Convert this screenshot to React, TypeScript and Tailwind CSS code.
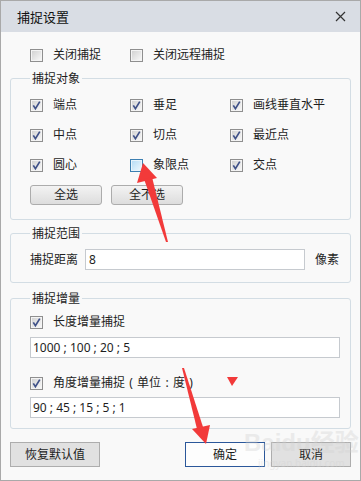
import React from "react";

function Box({ checked, hover }: { checked?: boolean; hover?: boolean }) {
  return (
    <span
      className={
        hover
          ? "relative flex h-[13px] w-[13px] shrink-0 items-center justify-center border border-[#3c7fb1] bg-[#e8f4fc]"
          : "relative flex h-[13px] w-[13px] shrink-0 items-center justify-center border border-[#8f8f8f] bg-[#f4f4f4]"
      }
    >
      <span
        className={
          hover
            ? "h-[9px] w-[9px] bg-gradient-to-br from-[#b7ddf6] to-[#eaf6fd]"
            : "h-[9px] w-[9px] bg-gradient-to-br from-[#d3d3d3] to-[#f7f7f7]"
        }
      />
      {checked && (
        <svg className="absolute left-0 top-0" width="11" height="11" viewBox="0 0 11 11">
          <path d="M2.3 5.4 L4.4 8.6 L8.8 1.6" fill="none" stroke="#3f5188" strokeWidth="1.7" strokeLinejoin="miter" />
        </svg>
      )}
    </span>
  );
}

function Check({ label, checked, hover }: { label: React.ReactNode; checked?: boolean; hover?: boolean }) {
  return (
    <div className="flex h-[20px] items-center gap-[10px]">
      <Box checked={checked} hover={hover} />
      <span className="whitespace-nowrap leading-[20px]">{label}</span>
    </div>
  );
}

function Field({ value, className }: { value: string; className: string }) {
  return (
    <div className={className}>
      <span className="leading-[19px]">{value}</span>
    </div>
  );
}

export default function App() {
  return (
    <div className="relative h-[481px] w-[361px] overflow-hidden border border-[#a9a9a9] bg-[#f9f9f9] font-['Noto_Sans','Noto_Sans_CJK_SC',sans-serif] text-[12px] text-[#1e1e1e]">
      {/* title bar */}
      <div className="flex h-[31px] items-center justify-between bg-[#d9dde4] pl-[16px] pr-[14px]">
        <span className="text-[13px] leading-[20px] text-[#111]">捕捉设置</span>
        <svg width="11" height="11" viewBox="0 0 11 11">
          <path d="M1 1 L10 10 M10 1 L1 10" stroke="#333" strokeWidth="1.2" />
        </svg>
      </div>

      <div className="flex flex-col px-[9px]">
        {/* top row */}
        <div className="mt-[13px] flex pl-[20px]">
          <div className="w-[100px]">
            <Check label="关闭捕捉" />
          </div>
          <Check label="关闭远程捕捉" />
        </div>

        {/* group 1 */}
        <fieldset className="mt-[5px] rounded-[3px] border border-[#d3dde4] pb-[14px] pl-[19px] pr-[10px] pt-[8px]">
          <legend className="px-[2px] text-[12px] leading-[17px]">捕捉对象</legend>
          <div className="grid grid-cols-[100px_100px_100px] gap-y-[10px]">
            <Check label="端点" checked />
            <Check label="垂足" checked />
            <Check label="画线垂直水平" checked />
            <Check label="中点" checked />
            <Check label="切点" checked />
            <Check label="最近点" checked />
            <Check label="圆心" checked />
            <Check label="象限点" hover />
            <Check label="交点" checked />
          </div>
          <div className="mt-[10px] flex gap-[9px]">
            <button className="flex h-[20px] w-[72px] items-center justify-center rounded-[3px] border border-[#acacac] bg-gradient-to-b from-[#f3f3f3] to-[#dddddd] leading-[18px]">
              全选
            </button>
            <button className="flex h-[20px] w-[72px] items-center justify-center rounded-[3px] border border-[#acacac] bg-gradient-to-b from-[#f3f3f3] to-[#dddddd] leading-[18px]">
              全不选
            </button>
          </div>
        </fieldset>

        {/* group 2 */}
        <fieldset className="mt-[5px] rounded-[3px] border border-[#d3dde4] pb-[12px] pl-[19px] pr-[10px] pt-[7px]">
          <legend className="px-[2px] text-[12px] leading-[17px]">捕捉范围</legend>
          <div className="flex h-[21px] items-center">
            <span className="w-[55px]">捕捉距离</span>
            <Field value="8" className="flex h-[21px] w-[220px] items-center border border-[#c6cacf] bg-white px-[3px]" />
            <span className="ml-[10px]">像素</span>
          </div>
        </fieldset>

        {/* group 3 */}
        <fieldset className="mt-[7px] rounded-[3px] border border-[#d3dde4] pb-[10px] pl-[19px] pr-[10px] pt-[5px]">
          <legend className="px-[2px] text-[12px] leading-[17px]">捕捉增量</legend>
          <Check label="长度增量捕捉" checked />
          <Field value="1000 ; 100 ; 20 ; 5" className="mt-[5px] flex h-[21px] w-[310px] items-center border border-[#c6cacf] bg-white px-[2px]" />
          <div className="mt-[15px]">
            <Check
              checked
              label={
                <span className="flex items-center">
                  <span>角度增量捕捉</span>
                  <span className="inline-block w-[12px] text-center">(</span>
                  <span>单位</span>
                  <span className="inline-block w-[12px] text-center">:</span>
                  <span>度</span>
                  <span className="inline-block w-[12px] text-center">)</span>
                </span>
              }
            />
          </div>
          <Field value="90 ; 45 ; 15 ; 5 ; 1" className="mt-[4px] flex h-[21px] w-[310px] items-center border border-[#c6cacf] bg-white px-[2px]" />
        </fieldset>

        {/* bottom buttons */}
        <div className="mt-[13px] flex">
          <button className="flex h-[25px] w-[90px] items-center justify-center border border-[#adadad] bg-[#e1e1e1]">
            恢复默认值
          </button>
          <div className="flex-1" />
          <button className="flex h-[25px] w-[80px] items-center justify-center border border-[#2b579a] bg-[#fdfdfd]">
            确定
          </button>
          <button className="ml-[6px] flex h-[25px] w-[80px] items-center justify-center border border-[#adadad] bg-[#e1e1e1]">
            取消
          </button>
        </div>
      </div>

      {/* faint watermark */}
      <div className="pointer-events-none absolute left-[243px] top-[428px] flex flex-col items-center text-[#d0d0d0] opacity-[0.35]">
        <span className="font-['Liberation_Sans','Noto_Sans_CJK_SC',sans-serif] text-[24px] font-bold leading-[28px]">Baidu经验</span>
        <span className="text-[10px] leading-[12px]">jingyan.baidu.com</span>
      </div>

      {/* red annotation arrows */}
      <svg className="pointer-events-none absolute left-0 top-0" width="361" height="481" viewBox="0 0 361 481">
        <polygon points="142,162 136,182 156,177" fill="#f23a3a" />
        <polygon points="143,178 151,176 167,241 165,241" fill="#f23a3a" />
        <polygon points="205,443 191,428 209,424" fill="#f23a3a" />
        <polygon points="181,367 183,367 202,426 196,428" fill="#f23a3a" />
        <polygon points="226,376 237,376 231,385" fill="#f23a3a" />
      </svg>
    </div>
  );
}
